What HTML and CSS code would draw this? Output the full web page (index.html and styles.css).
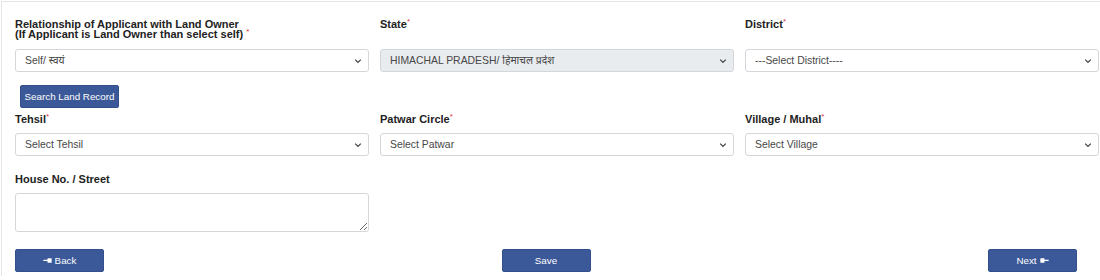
FILE: index.html
```html
<!DOCTYPE html>
<html lang="en">
<head>
<meta charset="utf-8">
<title>Land Record</title>
<link rel="stylesheet" href="styles.css">
</head>
<body>
<div class="panel">
  <div class="grid">
    <div class="field">
      <label class="label label-tall">Relationship of Applicant with Land Owner<br>(If Applicant is Land Owner than select self) <span class="req">*</span></label>
      <select class="control"><option>Self/ स्वयं</option></select>
    </div>
    <div class="field">
      <label class="label label-tall">State<span class="req">*</span></label>
      <select class="control control-disabled"><option>HIMACHAL PRADESH/ हिमाचल प्रदेश</option></select>
    </div>
    <div class="field">
      <label class="label label-tall">District<span class="req">*</span></label>
      <select class="control"><option>---Select District----</option></select>
    </div>
  </div>

  <div class="search-row">
    <button class="btn btn-search" type="button">Search Land Record</button>
  </div>

  <div class="grid">
    <div class="field">
      <label class="label">Tehsil<span class="req">*</span></label>
      <select class="control"><option>Select Tehsil</option></select>
    </div>
    <div class="field">
      <label class="label">Patwar Circle<span class="req">*</span></label>
      <select class="control"><option>Select Patwar</option></select>
    </div>
    <div class="field">
      <label class="label">Village / Muhal<span class="req">*</span></label>
      <select class="control"><option>Select Village</option></select>
    </div>
  </div>

  <div class="grid grid-gap">
    <div class="field">
      <label class="label">House No. / Street</label>
      <textarea class="control textarea"></textarea>
    </div>
  </div>

  <div class="actions">
    <button class="btn btn-action" type="button"><svg class="hand" viewBox="0 0 10 6" width="9" height="5"><path d="M0 2.2 H5 V1 Q5 .4 5.6 .4 H9.4 Q10 .4 10 1 V5 Q10 5.6 9.4 5.6 H5.6 Q5 5.6 5 5 V3.6 H0 Z" fill="#fff"/></svg>Back</button>
    <button class="btn btn-action" type="button">Save</button>
    <button class="btn btn-action" type="button">Next<svg class="hand hand-right" viewBox="0 0 10 6" width="9" height="5"><path d="M10 2.2 H5 V1 Q5 .4 4.4 .4 H.6 Q0 .4 0 1 V5 Q0 5.6 .6 5.6 H4.4 Q5 5.6 5 5 V3.6 H10 Z" fill="#fff"/></svg></button>
  </div>
</div>
</body>
</html>
```

FILE: styles.css
```css
html, body {
  margin: 0;
  padding: 0;
  background: #fff;
}

body {
  font-family: "Liberation Sans", Arial, "Noto Sans Devanagari", "Noto Sans", sans-serif;
  color: #222;
}

.panel {
  margin: 1px 0 0 1px;
  border-top: 1px solid #e4e4e4;
  border-left: 1px solid #e4e4e4;
  padding: 17px 0 4px 13px;
}

.grid {
  display: grid;
  grid-template-columns: 354px 354px 354px;
  column-gap: 11px;
}

.grid-gap {
  margin-top: 18px;
}

.field {
  display: flex;
  flex-direction: column;
}

.label {
  display: block;
  font-size: 11px;
  font-weight: bold;
  line-height: 10px;
  color: #222;
  margin-bottom: 9px;
}

.label-tall {
  height: 21px;
}

.req {
  color: #e0323c;
  font-size: 8px;
  font-weight: normal;
  vertical-align: 4px;
  line-height: 0;
}

.control {
  box-sizing: border-box;
  width: 100%;
  height: 23px;
  border: 1px solid #d3d6da;
  border-radius: 3px;
  background: #fff;
  font-family: "Liberation Sans", Arial, "Noto Sans Devanagari", "Noto Sans", sans-serif;
  font-size: 10.4px;
  color: #474747;
  padding: 0 20px 0 9px;
  margin: 0;
  -webkit-appearance: none;
  appearance: none;
  background-image: url("data:image/svg+xml,%3Csvg xmlns='http://www.w3.org/2000/svg' width='8' height='6' viewBox='0 0 8 6'%3E%3Cpath d='M1.2 1.6 L4 4.4 L6.8 1.6' fill='none' stroke='%23444' stroke-width='1.3'/%3E%3C/svg%3E");
  background-repeat: no-repeat;
  background-position: right 6px center;
  background-size: 8px 6px;
  outline: none;
}

.control-disabled {
  background-color: #e9ecef;
}

.textarea {
  height: 39px;
  background-image: none;
  resize: vertical;
  -webkit-appearance: auto;
  appearance: auto;
  padding: 4px 8px;
}

.search-row {
  padding: 13px 0 6px 5px;
}

.btn {
  box-sizing: border-box;
  height: 23px;
  border: 1px solid #34508b;
  border-radius: 2px;
  background: #3b5998;
  color: #fff;
  font-family: "Liberation Sans", Arial, sans-serif;
  font-size: 9.8px;
  padding: 0;
  margin: 0;
  display: inline-flex;
  align-items: center;
  justify-content: center;
  cursor: pointer;
}

.btn-search {
  width: 99px;
}

.btn-action {
  width: 89px;
  gap: 3px;
}

.hand {
  display: block;
}

.actions {
  display: flex;
  justify-content: space-between;
  width: 1062px;
  margin-top: 17px;
}
```
